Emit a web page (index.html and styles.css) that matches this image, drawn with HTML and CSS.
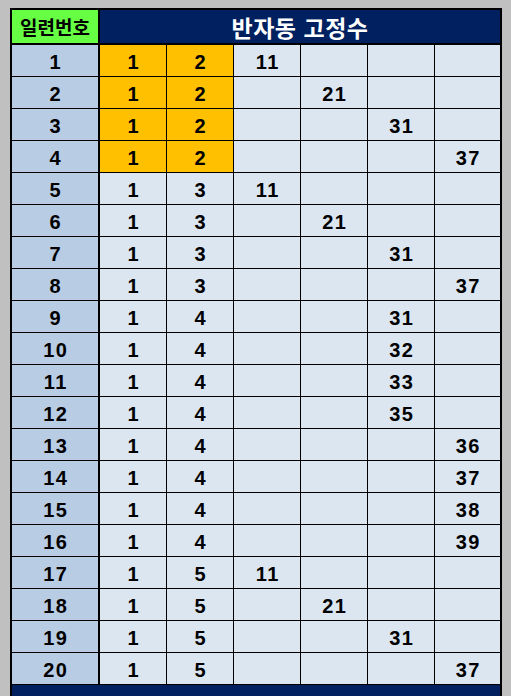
FILE: index.html
```html
<!DOCTYPE html>
<html lang="ko">
<head>
<meta charset="utf-8">
<title>반자동 고정수</title>
<link rel="stylesheet" href="styles.css">
</head>
<body>
<div class="sheet">
  <div class="grid">
    <div class="hd hd-serial">일련번호</div>
    <div class="hd hd-title">반자동 고정수</div>

    <div class="c s">1</div><div class="c y">1</div><div class="c y">2</div><div class="c">11</div><div class="c"></div><div class="c"></div><div class="c"></div>
    <div class="c s">2</div><div class="c y">1</div><div class="c y">2</div><div class="c"></div><div class="c">21</div><div class="c"></div><div class="c"></div>
    <div class="c s">3</div><div class="c y">1</div><div class="c y">2</div><div class="c"></div><div class="c"></div><div class="c">31</div><div class="c"></div>
    <div class="c s">4</div><div class="c y">1</div><div class="c y">2</div><div class="c"></div><div class="c"></div><div class="c"></div><div class="c">37</div>
    <div class="c s">5</div><div class="c">1</div><div class="c">3</div><div class="c">11</div><div class="c"></div><div class="c"></div><div class="c"></div>
    <div class="c s">6</div><div class="c">1</div><div class="c">3</div><div class="c"></div><div class="c">21</div><div class="c"></div><div class="c"></div>
    <div class="c s">7</div><div class="c">1</div><div class="c">3</div><div class="c"></div><div class="c"></div><div class="c">31</div><div class="c"></div>
    <div class="c s">8</div><div class="c">1</div><div class="c">3</div><div class="c"></div><div class="c"></div><div class="c"></div><div class="c">37</div>
    <div class="c s">9</div><div class="c">1</div><div class="c">4</div><div class="c"></div><div class="c"></div><div class="c">31</div><div class="c"></div>
    <div class="c s">10</div><div class="c">1</div><div class="c">4</div><div class="c"></div><div class="c"></div><div class="c">32</div><div class="c"></div>
    <div class="c s">11</div><div class="c">1</div><div class="c">4</div><div class="c"></div><div class="c"></div><div class="c">33</div><div class="c"></div>
    <div class="c s">12</div><div class="c">1</div><div class="c">4</div><div class="c"></div><div class="c"></div><div class="c">35</div><div class="c"></div>
    <div class="c s">13</div><div class="c">1</div><div class="c">4</div><div class="c"></div><div class="c"></div><div class="c"></div><div class="c">36</div>
    <div class="c s">14</div><div class="c">1</div><div class="c">4</div><div class="c"></div><div class="c"></div><div class="c"></div><div class="c">37</div>
    <div class="c s">15</div><div class="c">1</div><div class="c">4</div><div class="c"></div><div class="c"></div><div class="c"></div><div class="c">38</div>
    <div class="c s">16</div><div class="c">1</div><div class="c">4</div><div class="c"></div><div class="c"></div><div class="c"></div><div class="c">39</div>
    <div class="c s">17</div><div class="c">1</div><div class="c">5</div><div class="c">11</div><div class="c"></div><div class="c"></div><div class="c"></div>
    <div class="c s">18</div><div class="c">1</div><div class="c">5</div><div class="c"></div><div class="c">21</div><div class="c"></div><div class="c"></div>
    <div class="c s">19</div><div class="c">1</div><div class="c">5</div><div class="c"></div><div class="c"></div><div class="c">31</div><div class="c"></div>
    <div class="c s">20</div><div class="c">1</div><div class="c">5</div><div class="c"></div><div class="c"></div><div class="c"></div><div class="c">37</div>

    <div class="foot"></div>
  </div>
</div>
</body>
</html>
```
FILE: styles.css
```css
html, body {
  margin: 0;
  padding: 0;
  background: #c0c0c0;
  overflow: hidden;
  height: 696px;
}

.sheet {
  margin: 8px 0 0 10px;
  width: 488px;
  border: 2px solid #000;
  background: #000;
}

.grid {
  display: grid;
  grid-template-columns: 87px 66px 66px 66px 66px 66px 65px;
  grid-template-rows: 34px;
  grid-auto-rows: 31px;
  gap: 1px;
  background: #000;
}

.hd {
  grid-row: 1;
  height: 33px;
  border-bottom: 1px solid #000;
  display: flex;
  align-items: center;
  justify-content: center;
  font-family: "Noto Sans CJK KR", sans-serif;
  font-weight: 700;
}

.hd-serial {
  background: #66ff44;
  color: #000;
  font-size: 19px;
  border-right: 1px solid #000;
}

.hd-title {
  grid-column: span 6;
  background: #002060;
  color: #fff;
  font-size: 23px;
  letter-spacing: 0.5px;
}

.c {
  background: #dce6f1;
  display: flex;
  align-items: center;
  justify-content: center;
  padding-top: 4px;
  box-sizing: border-box;
  font-family: "Liberation Sans", Arial, sans-serif;
  font-weight: 700;
  font-size: 20px;
  letter-spacing: 1.5px;
  text-indent: 1.5px;
  color: #000;
}

.c.s {
  background: #b8cce4;
  border-right: 1px solid #000;
}

.c.y {
  background: #ffc000;
}

.foot {
  grid-column: 1 / -1;
  height: 11px;
  background: #002060;
}
```
